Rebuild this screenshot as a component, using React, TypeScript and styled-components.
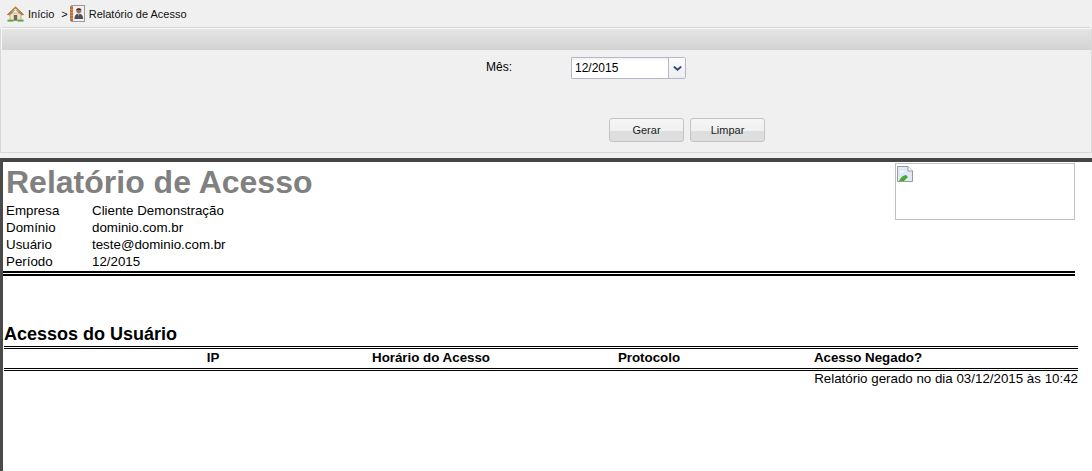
import { FC } from 'react';
import styled, { createGlobalStyle } from 'styled-components';

const GlobalStyle = createGlobalStyle`
  html, body {
    margin: 0;
    padding: 0;
    height: 471px;
    overflow: hidden;
    background: #ffffff;
    font-family: 'Liberation Sans', Arial, sans-serif;
    color: #000000;
  }
`;

const TopArea = styled.div`
  height: 158px;
  background: #f0f0f0;
`;

const Breadcrumb = styled.div`
  display: flex;
  align-items: center;
  height: 27px;
  padding-left: 7px;
  font-size: 11px;
  color: #111111;
`;

const CrumbText = styled.span`
  margin-left: 4px;
`;

const CrumbSeparator = styled.span`
  margin: 0 2px 0 7px;
  font-size: 11px;
`;

const FilterPanel = styled.form`
  display: flex;
  flex-direction: column;
  height: 126px;
  margin: 0;
  box-sizing: border-box;
  background: #f0f0f0;
  border: 1px solid #d8d8d8;
  border-radius: 3px 3px 0 0;
`;

const PanelHeader = styled.div`
  height: 22px;
  flex: none;
  background: linear-gradient(#e6e6e6, #d2d2d2);
  box-shadow: inset 1px 1px #f8f8f8;
`;

const FieldRow = styled.div`
  display: flex;
  align-items: flex-start;
  height: 61px;
  padding: 7px 0 0 485px;
  font-size: 12px;
`;

const FieldLabel = styled.label`
  width: 85px;
  line-height: 20px;
`;

const SelectBox = styled.div`
  display: flex;
  width: 115px;
  height: 22px;
  box-sizing: border-box;
  background: #ffffff;
  border: 1px solid #b5b8c8;
  border-radius: 0 2px 2px 0;
`;

const SelectValue = styled.span`
  flex: 1;
  padding-left: 3px;
  line-height: 20px;
  font-size: 12px;
  background: linear-gradient(#f0f0f0, #ffffff 3px);
`;

const SelectTrigger = styled.span`
  display: flex;
  align-items: center;
  justify-content: center;
  width: 16px;
  background: linear-gradient(#fbfbfb, #eeeef2);
  border-left: 1px solid #b5b8c8;
`;

const ButtonRow = styled.div`
  display: flex;
  gap: 6px;
  padding-left: 608px;
`;

const ActionButton = styled.button`
  width: 75px;
  height: 24px;
  padding: 0;
  border: 1px solid #c4c4c4;
  border-radius: 3px;
  background: linear-gradient(#f5f5f5 0, #f0f0f0 55%, #dedede 55%, #dedede 100%);
  font-family: inherit;
  font-size: 11px;
  color: #222222;
`;

const ReportFrame = styled.main`
  height: 313px;
  box-sizing: border-box;
  border-top: 4px solid #454545;
  border-left: 3px solid #4a4a4a;
  background: #ffffff;
`;

const ReportHeader = styled.header`
  display: flex;
  justify-content: space-between;
  width: 1072px;
  height: 114px;
  box-sizing: border-box;
  padding-left: 3px;
  border-bottom: 5px double #000000;
`;

const ReportTitle = styled.h1`
  margin: 0;
  padding-top: 1px;
  font-size: 32px;
  line-height: 39px;
  font-weight: bold;
  color: #808080;
`;

const InfoGrid = styled.dl`
  display: grid;
  grid-template-columns: 86px auto;
  grid-auto-rows: 17px;
  margin: 0;
  font-size: 13.33px;
  line-height: 17px;
`;

const InfoTerm = styled.dt`
  margin: 0;
`;

const InfoValue = styled.dd`
  margin: 0;
`;

const LogoBox = styled.div`
  width: 180px;
  height: 57px;
  margin-top: 1px;
  box-sizing: border-box;
  padding: 2px 1px;
  border: 1px solid #c0c0c0;
`;

const SectionTitle = styled.h2`
  margin: 47px 0 0 1px;
  font-size: 18px;
  line-height: 23px;
  font-weight: bold;
`;

const AccessTable = styled.div`
  display: grid;
  grid-template-columns: 318px 118px 318px 120px;
  width: 1074px;
  height: 25px;
  box-sizing: border-box;
  margin-left: 1px;
  padding-left: 50px;
  border-top: 3px double #000000;
  border-bottom: 3px double #000000;
  font-size: 13.33px;
  line-height: 17px;
  font-weight: bold;
`;

const ColumnHead = styled.div`
  text-align: center;
  white-space: nowrap;
`;

const Footer = styled.div`
  width: 1075px;
  text-align: right;
  font-size: 13.33px;
  line-height: 15px;
`;

const HomeIcon: FC = () => (
  <svg width="17" height="16" viewBox="0 0 17 16">
    <rect x="3" y="7" width="11" height="7.5" fill="#efe3c4" stroke="#a8956a" strokeWidth="0.6" />
    <rect x="6.8" y="9" width="3.4" height="5.5" fill="#6e6a60" />
    <path d="M0.3 8.6 L8.5 0.8 L16.7 8.6 L14.6 8.9 L8.5 3.6 L2.4 8.9 Z" fill="#c9812f" stroke="#7f6a4a" strokeWidth="0.6" />
    <path d="M4.6 6 L8.5 2.6 L12.4 6 L8.5 3.8 Z" fill="#f4e8cf" />
    <rect x="0.5" y="13.6" width="6" height="2" fill="#5fa845" />
    <rect x="10.5" y="13.6" width="6" height="2" fill="#5fa845" />
  </svg>
);

const ReportIcon: FC = () => (
  <svg width="15" height="17" viewBox="0 0 15 17">
    <rect x="1.5" y="0.5" width="13" height="16" fill="#f0f0f0" stroke="#9c9c9c" />
    <rect x="0" y="1" width="3" height="15" fill="#d98a4a" />
    <path d="M0 3h3M0 6h3M0 9h3M0 12h3M0 15h3" stroke="#8a4f22" strokeWidth="0.8" />
    <circle cx="8.8" cy="5.6" r="2.6" fill="#9a7057" />
    <path d="M6 5 Q8.8 1.6 11.6 5 Z" fill="#4a3226" />
    <path d="M4.4 14 Q4.6 8.8 8.8 8.8 Q13 8.8 13.2 14 Z" fill="#4b4f58" />
    <path d="M8.2 9 H9.4 L8.8 11.6 Z" fill="#d8d8d8" />
  </svg>
);

const ChevronIcon: FC = () => (
  <svg width="9" height="5" viewBox="0 0 9 5">
    <path d="M0.8 0.6 L4.5 3.8 L8.2 0.6" fill="none" stroke="#2f4a78" strokeWidth="1.9" />
  </svg>
);

const BrokenImageIcon: FC = () => (
  <svg width="16" height="16" viewBox="0 0 16 16">
    <path d="M0.5 0.5 H11 L15.5 5 V15.5 H0.5 Z" fill="#dfe9fa" stroke="#9a9a9a" />
    <path d="M11 0.5 V5 H15.5" fill="#ffffff" stroke="#9a9a9a" />
    <path d="M2 15 Q5 9 9 9 L11 11 L7 15 Z" fill="#4aa82e" />
    <path d="M3 6 Q5 4 8 5.5 L3 7 Z" fill="#ffffff" />
  </svg>
);

const App: FC = () => (
  <>
    <GlobalStyle />
    <TopArea>
      <Breadcrumb>
        <HomeIcon />
        <CrumbText>Início</CrumbText>
        <CrumbSeparator>&gt;</CrumbSeparator>
        <ReportIcon />
        <CrumbText>Relatório de Acesso</CrumbText>
      </Breadcrumb>
      <FilterPanel>
        <PanelHeader />
        <FieldRow>
          <FieldLabel>Mês:</FieldLabel>
          <SelectBox>
            <SelectValue>12/2015</SelectValue>
            <SelectTrigger>
              <ChevronIcon />
            </SelectTrigger>
          </SelectBox>
        </FieldRow>
        <ButtonRow>
          <ActionButton type="button">Gerar</ActionButton>
          <ActionButton type="button">Limpar</ActionButton>
        </ButtonRow>
      </FilterPanel>
    </TopArea>
    <ReportFrame>
      <ReportHeader>
        <div>
          <ReportTitle>Relatório de Acesso</ReportTitle>
          <InfoGrid>
            <InfoTerm>Empresa</InfoTerm>
            <InfoValue>Cliente Demonstração</InfoValue>
            <InfoTerm>Domínio</InfoTerm>
            <InfoValue>dominio.com.br</InfoValue>
            <InfoTerm>Usuário</InfoTerm>
            <InfoValue>teste@dominio.com.br</InfoValue>
            <InfoTerm>Período</InfoTerm>
            <InfoValue>12/2015</InfoValue>
          </InfoGrid>
        </div>
        <LogoBox>
          <BrokenImageIcon />
        </LogoBox>
      </ReportHeader>
      <SectionTitle>Acessos do Usuário</SectionTitle>
      <AccessTable>
        <ColumnHead>IP</ColumnHead>
        <ColumnHead>Horário do Acesso</ColumnHead>
        <ColumnHead>Protocolo</ColumnHead>
        <ColumnHead>Acesso Negado?</ColumnHead>
      </AccessTable>
      <Footer>Relatório gerado no dia 03/12/2015 às 10:42</Footer>
    </ReportFrame>
  </>
);

export default App;
